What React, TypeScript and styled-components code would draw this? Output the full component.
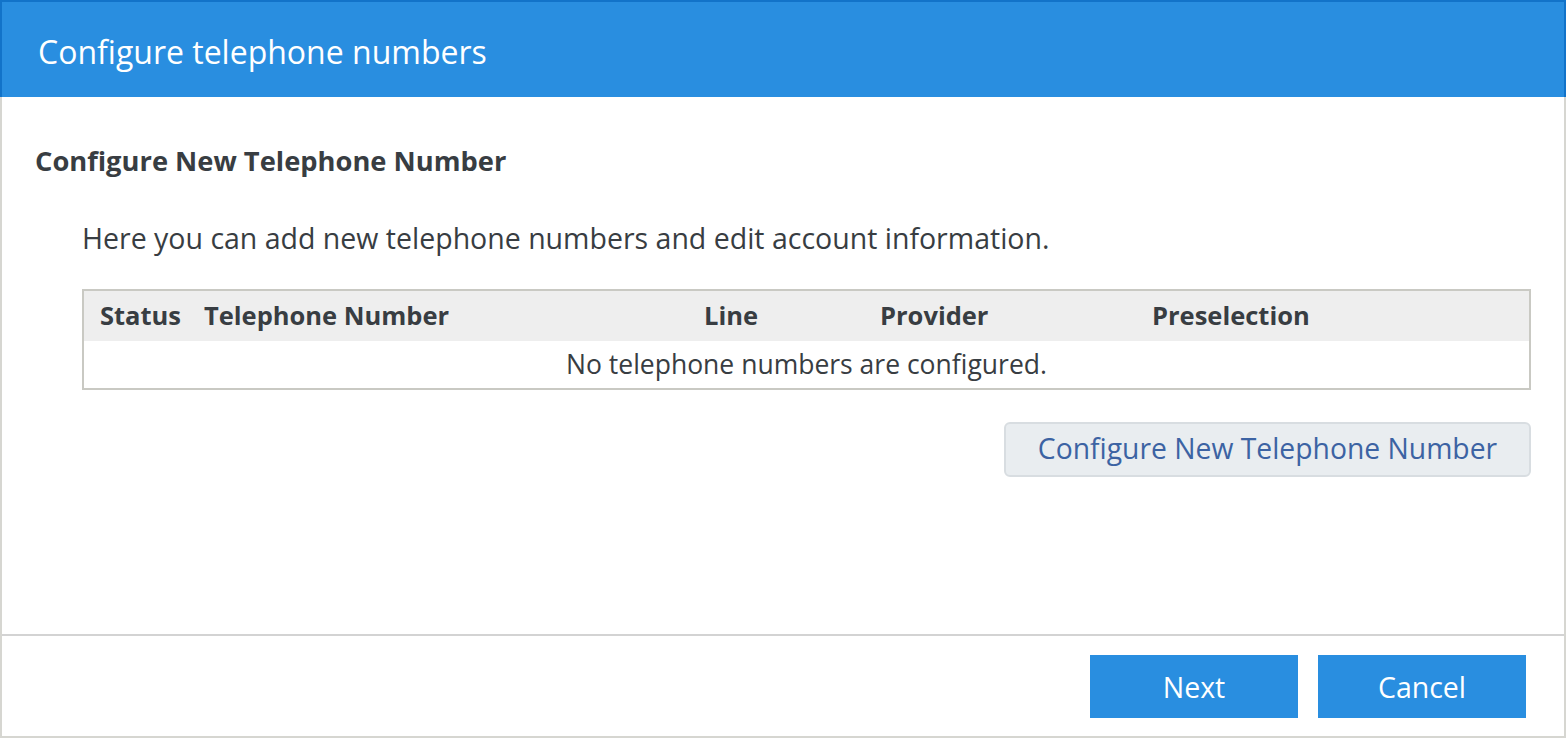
import styled, { createGlobalStyle } from 'styled-components';

const GlobalStyle = createGlobalStyle`
  *, *::before, *::after {
    box-sizing: border-box;
  }
  html, body {
    margin: 0;
    padding: 0;
    background: #ffffff;
  }
  body {
    font-family: "Source Sans Pro", "Open Sans", "Noto Sans", sans-serif;
    color: #383d42;
  }
`;

const Dialog = styled.div`
  width: 1566px;
  height: 738px;
  display: flex;
  flex-direction: column;
  border: 2px solid #d6d6d1;
  border-top: none;
`;

const Header = styled.div`
  height: 97px;
  flex-shrink: 0;
  margin: 0 -2px;
  background: #298ee0;
  border: 2px solid #1273c9;
  border-bottom: none;
  display: flex;
  align-items: center;
  padding: 4px 0 0 36px;
`;

const Title = styled.h1`
  margin: 0;
  color: #ffffff;
  font-size: 32px;
  line-height: 40px;
  font-weight: 400;
`;

const Body = styled.div`
  flex: 1;
  padding: 46px 33px 0 33px;
  display: flex;
  flex-direction: column;
`;

const SectionTitle = styled.h2`
  margin: 0;
  font-size: 27.3px;
  line-height: 36px;
  font-weight: 700;
  color: #383d42;
`;

const Content = styled.div`
  padding-left: 47px;
  display: flex;
  flex-direction: column;
`;

const Intro = styled.p`
  margin: 41px 0 33px;
  font-size: 28.5px;
  line-height: 36px;
  color: #383d42;
`;

const Table = styled.table`
  width: 100%;
  table-layout: fixed;
  border-collapse: collapse;
  border: 2px solid #c9c9c3;
  font-size: 26.5px;
`;

const HeadRow = styled.tr`
  background: #eeeeee;
  height: 51px;
`;

const Th = styled.th`
  text-align: left;
  font-size: 25.5px;
  font-weight: 700;
  padding: 0 0 2px 16px;
  color: #383d42;
  white-space: nowrap;
`;

const EmptyCell = styled.td`
  text-align: center;
  height: 48px;
  padding: 0 0 2px;
  color: #383d42;
`;

const Actions = styled.div`
  display: flex;
  justify-content: flex-end;
  margin-top: 32px;
`;

const SecondaryButton = styled.button`
  height: 55px;
  width: 527px;
  padding: 0 0 3px;
  font-family: inherit;
  font-size: 28.3px;
  color: #3c63a3;
  background: #e9edf0;
  border: 2px solid #d8dde1;
  border-radius: 6px;
`;

const Footer = styled.div`
  height: 102px;
  flex-shrink: 0;
  border-top: 2px solid #d3d3d3;
  display: flex;
  justify-content: flex-end;
  align-items: flex-start;
  gap: 20px;
  padding: 19px 38px 0 0;
`;

const PrimaryButton = styled.button`
  width: 208px;
  height: 63px;
  padding: 0;
  border: none;
  background: #298ee0;
  color: #ffffff;
  font-family: inherit;
  font-size: 28.5px;
`;

const columns = [
  { label: 'Status', width: 105 },
  { label: 'Telephone Number', width: 500 },
  { label: 'Line', width: 176 },
  { label: 'Provider', width: 272 },
  { label: 'Preselection' },
];

export default function App() {
  return (
    <>
      <GlobalStyle />
      <Dialog>
        <Header>
          <Title>Configure telephone numbers</Title>
        </Header>
        <Body>
          <SectionTitle>Configure New Telephone Number</SectionTitle>
          <Content>
            <Intro>Here you can add new telephone numbers and edit account information.</Intro>
            <Table>
              <colgroup>
                {columns.map((c) => (
                  <col key={c.label} style={c.width ? { width: c.width } : undefined} />
                ))}
              </colgroup>
              <thead>
                <HeadRow>
                  {columns.map((c) => (
                    <Th key={c.label}>{c.label}</Th>
                  ))}
                </HeadRow>
              </thead>
              <tbody>
                <tr>
                  <EmptyCell colSpan={5}>No telephone numbers are configured.</EmptyCell>
                </tr>
              </tbody>
            </Table>
            <Actions>
              <SecondaryButton>Configure New Telephone Number</SecondaryButton>
            </Actions>
          </Content>
        </Body>
        <Footer>
          <PrimaryButton>Next</PrimaryButton>
          <PrimaryButton>Cancel</PrimaryButton>
        </Footer>
      </Dialog>
    </>
  );
}
